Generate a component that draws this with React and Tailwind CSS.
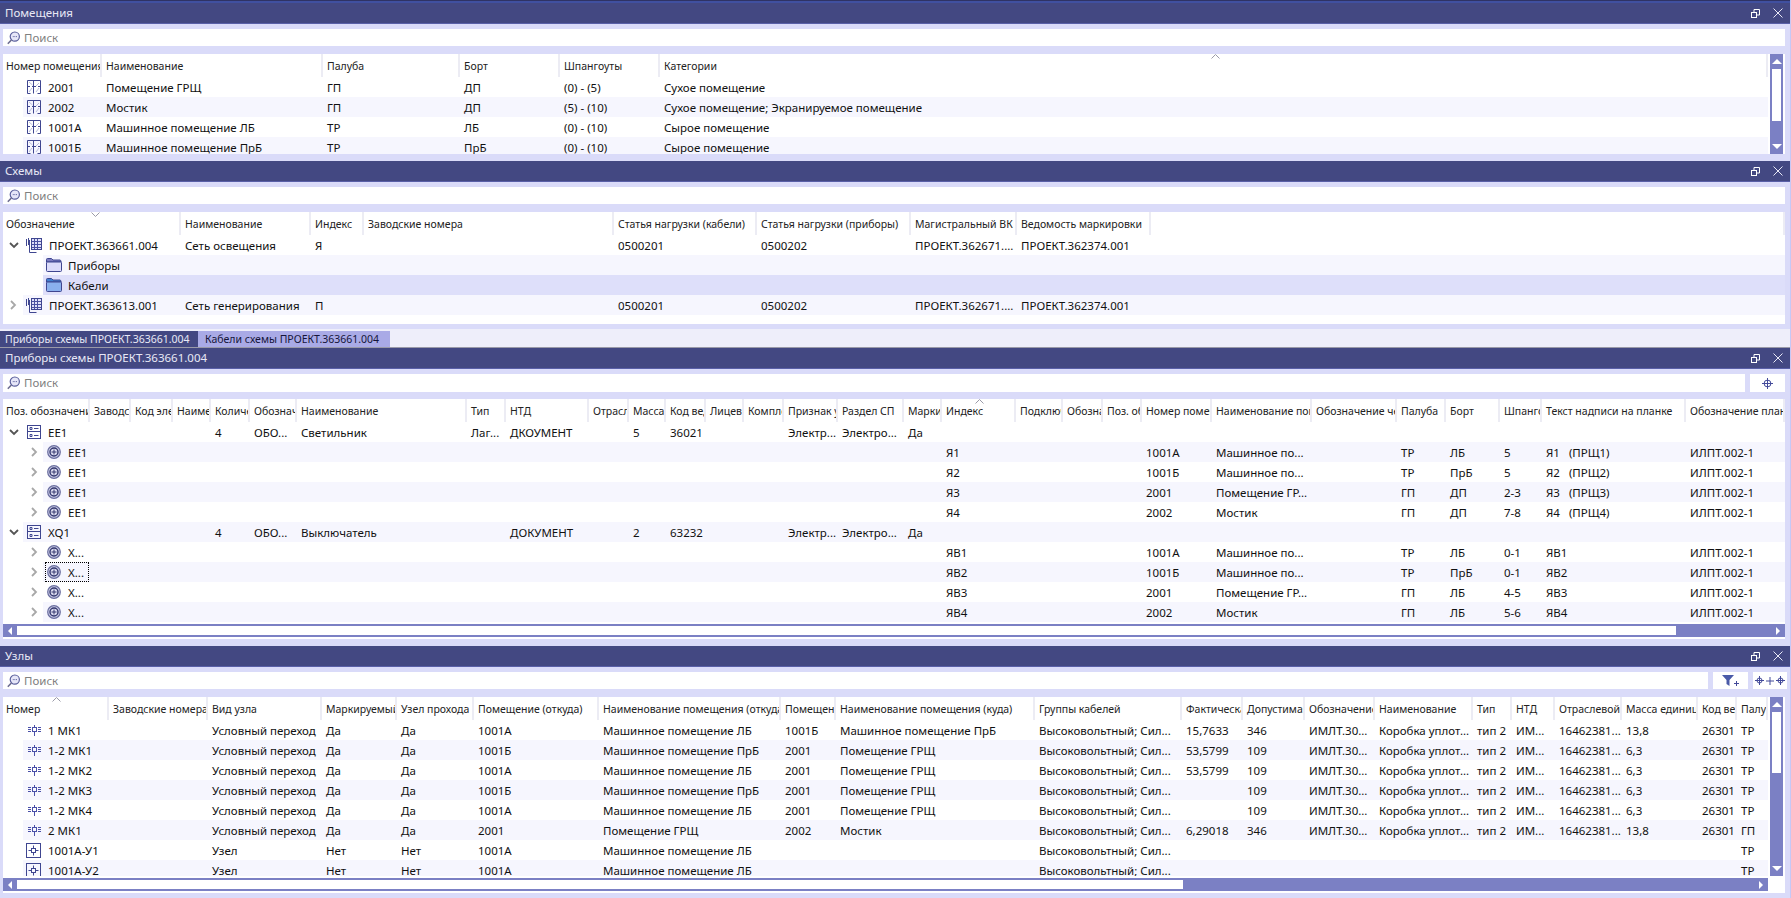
const P1_COLS = "grid-cols-[99px_221px_137px_100px_100px_1fr]"
const P2_COLS = "grid-cols-[178px_130px_53px_250px_143px_154px_106px_134px_1fr]"
const P3_COLS = "grid-cols-[87px_41px_42px_38px_39px_47px_170px_39px_83px_40px_37px_40px_38px_40px_54px_66px_38px_74px_47px_40px_39px_70px_100px_85px_49px_54px_42px_144px_99px]"
const P4_COLS = "grid-cols-[106px_99px_114px_75px_77px_125px_182px_55px_199px_147px_61px_62px_70px_98px_39px_43px_67px_76px_39px_31px]"

const SHADE_1 = "bg-[linear-gradient(to_right,transparent_20px,#f6f6fe_20px)]"
const SHADE_2 = "bg-[linear-gradient(to_right,transparent_40px,#f6f6fe_40px)]"
const SELECTED = "bg-[linear-gradient(to_right,transparent_40px,#dedffa_40px)]"

const SearchIcon = () => (
  <svg width="14" height="14" viewBox="0 0 14 14" className="shrink-0">
    <circle cx="7.8" cy="5.6" r="4.6" fill="#e6e6f8" stroke="#5a5f9c" strokeWidth="1.2" />
    <path d="M4.4 9L.8 12.8" stroke="#6c6c90" strokeWidth="1.6" />
    <path d="M5.8 5.6h.9M7.4 5.6h.9M9 5.6h.9" stroke="#5a5f9c" strokeWidth="1" />
  </svg>
)

const RestoreIcon = () => (
  <svg width="9" height="9" viewBox="0 0 9 9" fill="none" stroke="#fff" strokeWidth="1">
    <rect x="0.5" y="3.5" width="5" height="5" />
    <path d="M3 3.5V.5h5.5V6H5.5" />
  </svg>
)

const CloseIcon = () => (
  <svg width="10" height="10" viewBox="0 0 10 10" fill="none" stroke="#e8e8f6" strokeWidth="1">
    <path d="M.5.5l9 9M9.5.5l-9 9" />
  </svg>
)

const RoomIcon = () => (
  <svg width="14" height="14" viewBox="0 0 14 14" fill="none" className="shrink-0">
    <path d="M2 2l3.5 3M9 6l3 -3M2 12l3 -4M9 12l3 -4" stroke="#b9bcdf" />
    <path d="M.5 13.5V.5h13v13M.5 13.5h3M10.5 13.5h3" stroke="#3f4690" />
    <path d="M6.5 .5V13.5M.5 6.5H3M5 6.5h4M11 6.5h2.5" stroke="#3f4690" />
  </svg>
)

const SchemaIcon = () => (
  <svg width="16" height="15" viewBox="0 0 16 15" fill="none" className="-ml-[1px] shrink-0">
    <path d="M.5 1v7M2.5 0v7" stroke="#3f4690" strokeWidth="1" />
    <rect x="5.5" y="0.5" width="10" height="11" fill="#dfe0f8" stroke="#3f4690" />
    <path d="M6 3.5h9M6 6.5h9M6 9.5h9M8.5 1v10M11.5 1v10" stroke="#4a50a0" />
    <path d="M3.5 2v12.5h7" stroke="#3f4690" />
  </svg>
)

const FolderIcon = ({ body, top }) => (
  <svg width="16" height="14" viewBox="0 0 16 14" className="-mx-[1px] shrink-0">
    <path d="M.5 3V1.5a1 1 0 0 1 1-1h4l1.5 1.5h7a1.5 1.5 0 0 1 1 1V4H.5z" fill={top} stroke="#3f4690" />
    <rect x="0.5" y="4" width="15" height="9.5" rx="1" fill={body} stroke="#3f4690" />
  </svg>
)

const RackIcon = () => (
  <svg width="14" height="14" viewBox="0 0 14 14" fill="none" stroke="#3f4690" className="shrink-0">
    <rect x="0.5" y="0.5" width="13" height="13" />
    <path d="M.5 6.5h13" />
    <path d="M3 2.5h2v2H3zM3 9.5h2v2H3z" />
    <path d="M7 3.5h4.5M7 10.5h4.5" />
  </svg>
)

const DeviceIcon = () => (
  <svg width="14" height="14" viewBox="0 0 14 14" fill="none" className="shrink-0">
    <circle cx="7" cy="7" r="6.3" fill="#c9cbe6" stroke="#6a6e9f" strokeWidth="1.2" />
    <circle cx="7" cy="7" r="4" fill="#dcdcf0" stroke="#34386f" strokeWidth="1.4" />
    <path d="M7 4.5v5M4.5 7h5" stroke="#34386f" strokeWidth="1" />
  </svg>
)

const PassIcon = () => (
  <svg width="13" height="11" viewBox="0 0 13 11" fill="none" stroke="#4a50a8" className="mx-[0.5px] shrink-0">
    <path d="M0 2.5h3M0 4.5h3M0 6.5h3M10 2.5h3M10 4.5h3M10 6.5h3" />
    <rect x="4.5" y="2.5" width="4" height="4" />
    <path d="M6.5 0v2.5M6.5 6.5V11" />
  </svg>
)

const NodeIcon = () => (
  <svg width="15" height="15" viewBox="0 0 15 15" fill="none" stroke="#3f4690" className="-ml-[1px] shrink-0">
    <rect x="0.5" y="0.5" width="14" height="14" />
    <rect x="5.5" y="5.5" width="4" height="4" />
    <path d="M7.5 2.5v3M7.5 9.5v3M2.5 7.5h3M9.5 7.5h3" />
  </svg>
)

const Crosshair = () => (
  <svg width="11" height="11" viewBox="0 0 11 11" fill="none" stroke="#434a9a">
    <circle cx="5.5" cy="5.5" r="3.4" />
    <path d="M5.5 0v11M0 5.5h11" />
  </svg>
)

const SmallCross = () => (
  <svg width="9" height="9" viewBox="0 0 9 9" fill="none" stroke="#434a9a">
    <circle cx="4.5" cy="4.5" r="2.5" />
    <path d="M4.5 0v9M0 4.5h9" />
  </svg>
)

const FilterIcon = () => (
  <svg width="17" height="11" viewBox="0 0 17 11">
    <path d="M0 0h12L7.5 5v6L4.5 9V5z" fill="#4a5aa8" />
    <path d="M12 8.5h5M14.5 6v5" stroke="#434a9a" fill="none" />
  </svg>
)

const ChevronDown = ({ className }) => (
  <svg width="10" height="7" viewBox="0 0 10 7" fill="none" stroke="#555" strokeWidth="1.8" className={className}>
    <path d="M1 1l4 4 4-4" />
  </svg>
)

const ChevronRight = ({ className }) => (
  <svg width="7" height="10" viewBox="0 0 7 10" fill="none" stroke="#a8a8a8" strokeWidth="1.8" className={className}>
    <path d="M1 1l4 4-4 4" />
  </svg>
)

const TriUp = () => <div className="h-0 w-0 border-x-[5px] border-b-[5px] border-x-transparent border-b-white" />
const TriDown = () => <div className="h-0 w-0 border-x-[5px] border-t-[5px] border-x-transparent border-t-white" />
const TriLeft = () => <div className="h-0 w-0 border-y-[4px] border-r-[4px] border-y-transparent border-r-white" />
const TriRight = () => <div className="h-0 w-0 border-y-[4px] border-l-[4px] border-y-transparent border-l-white" />

const SortMark = ({ className, down }) => (
  <svg width="9" height="5" viewBox="0 0 9 5" fill="none" stroke="#9a9aa8" className={"absolute " + className}>
    <path d={down ? "M.5.5l4 4 4-4" : "M.5 4.5l4-4 4 4"} />
  </svg>
)

function TitleBar({ title }) {
  return (
    <div className="flex h-[21px] shrink-0 items-center justify-between border-b border-[#5a60a8] bg-[#434882] pl-[5px] pr-[7px] leading-5 text-[#e8e8f6]">
      <span>{title}</span>
      <div className="flex items-center gap-[13px]">
        <RestoreIcon />
        <CloseIcon />
      </div>
    </div>
  )
}

function SearchBox({ className }) {
  return (
    <div className={"flex items-center gap-[3px] bg-white pl-[4px] leading-4 text-[#808080] " + className}>
      <SearchIcon />
      <span>Поиск</span>
    </div>
  )
}

function HeaderRow({ cols, names, mark }) {
  return (
    <div className={"relative grid h-[23px] shrink-0 items-stretch text-[10.5px] " + cols}>
      {names.map((n, i) => (
        <div
          key={i}
          className={
            "overflow-hidden whitespace-nowrap border-r-2 border-[#ececf4] pt-px leading-[23px] text-[#222] " +
            (i === 0 ? "pl-[3px]" : "pl-1")
          }
        >
          {n}
        </div>
      ))}
      {mark}
    </div>
  )
}

function Row({ cols, cells, first, bg }) {
  return (
    <div className={"grid h-5 shrink-0 items-center " + cols + " " + (bg || "")}>
      <div className="flex h-5 items-center overflow-hidden">{first}</div>
      {cells.map((c, i) => (
        <div key={i} className="h-5 overflow-hidden whitespace-pre pl-1 pt-px leading-5 text-[#111]">
          {c}
        </div>
      ))}
    </div>
  )
}

// first column of a tree row
function TopItem({ open, icon, label }) {
  return (
    <div className="flex items-center">
      <div className="flex w-[24px] justify-center pr-[4px] pl-[1px]">
        {open === undefined ? null : open ? <ChevronDown /> : <ChevronRight />}
      </div>
      {icon}
      <span className="ml-[7px] h-5 pt-px leading-5 text-[#111]">{label}</span>
    </div>
  )
}

function ChildItem({ icon, label, focused, arrow }) {
  return (
    <div className="flex items-center">
      <div className="flex w-[42px] justify-end pr-[7px]">{arrow ? <ChevronRight /> : null}</div>
      <div className={"flex h-5 items-center gap-[7px] pl-[2px] " + (focused ? "w-[44px] outline-1 -outline-offset-1 outline-dotted outline-black" : "")}>
        {icon}
        <span className="h-5 pt-px leading-5 text-[#111]">{label}</span>
      </div>
    </div>
  )
}

function VScroll({ thumb }) {
  return (
    <div className={"ml-[2px] mr-[2px] flex w-[13px] shrink-0 flex-col items-center bg-[#7b80c4]"}>
      <div className="flex h-[15px] shrink-0 items-center justify-center">
        <TriUp />
      </div>
      <div className={"w-[9px] shrink-0 bg-white " + thumb} />
      <div className="flex-1" />
      <div className="flex h-[15px] shrink-0 items-center justify-center">
        <TriDown />
      </div>
    </div>
  )
}

function HScroll({ thumb, className }) {
  return (
    <div className={"flex h-[13px] shrink-0 items-center bg-[#7b80c4] " + className}>
      <div className="flex w-[14px] shrink-0 justify-center">
        <TriLeft />
      </div>
      <div className={"h-[9px] shrink-0 bg-white " + thumb} />
      <div className="flex-1" />
      <div className="flex w-[14px] shrink-0 justify-center">
        <TriRight />
      </div>
    </div>
  )
}

const rooms = [
  ["2001", "Помещение ГРЩ", "ГП", "ДП", "(0) - (5)", "Сухое помещение"],
  ["2002", "Мостик", "ГП", "ДП", "(5) - (10)", "Сухое помещение; Экранируемое помещение"],
  ["1001А", "Машинное помещение ЛБ", "ТР", "ЛБ", "(0) - (10)", "Сырое помещение"],
  ["1001Б", "Машинное помещение ПрБ", "ТР", "ПрБ", "(0) - (10)", "Сырое помещение"],
]

const p3Head = ["Поз. обозначение", "Заводские", "Код элемента", "Наименование", "Количество", "Обозначение", "Наименование", "Тип", "НТД", "Отраслевой", "Масса", "Код ведомости", "Лицевой", "Комплект", "Признак установки", "Раздел СП", "Маркировка", "Индекс", "Подключение", "Обозначение", "Поз. обозначение", "Номер помещения", "Наименование помещения", "Обозначение чертежа", "Палуба", "Борт", "Шпангоуты", "Текст надписи на планке", "Обозначение планки"]

const groupCells = (name, type, doc, mass, code) => ["", "", "", "4", "ОБО...", name, type, doc, "", mass, code, "", "", "Электр...", "Электро...", "Да", "", "", "", "", "", "", "", "", "", "", "", ""]
const deviceCells = (idx, num, room, deck, side, frame, text) => ["", "", "", "", "", "", "", "", "", "", "", "", "", "", "", "", idx, "", "", "", num, room, "", deck, side, frame, text, "ИЛПТ.002-1"]

const p4Head = ["Номер", "Заводские номера", "Вид узла", "Маркируемый", "Узел прохода", "Помещение (откуда)", "Наименование помещения (откуда)", "Помещение (куда)", "Наименование помещения (куда)", "Группы кабелей", "Фактическая", "Допустимая", "Обозначение", "Наименование", "Тип", "НТД", "Отраслевой", "Масса единицы", "Код ведомости", "Палуба"]

const passCells = (from, fromName, to, toName, fact, allow, mass, deck) => ["", "Условный переход", "Да", "Да", from, fromName, to, toName, "Высоковольтный; Сил...", fact, allow, "ИМЛТ.30...", "Коробка уплот...", "тип 2", "ИМ...", "16462381...", mass, "26301", deck]
const nodeCells = ["", "Узел", "Нет", "Нет", "1001А", "Машинное помещение ЛБ", "", "", "Высоковольтный; Сил...", "", "", "", "", "", "", "", "", "", "ТР"]

const LB = "Машинное помещение ЛБ"
const PRB = "Машинное помещение ПрБ"
const GRSH = "Помещение ГРЩ"

const nodes = [
  ["1 МК1", passCells("1001А", LB, "1001Б", PRB, "15,7633", "346", "13,8", "ТР")],
  ["1-2 МК1", passCells("1001Б", PRB, "2001", GRSH, "53,5799", "109", "6,3", "ТР")],
  ["1-2 МК2", passCells("1001А", LB, "2001", GRSH, "53,5799", "109", "6,3", "ТР")],
  ["1-2 МК3", passCells("1001Б", PRB, "2001", GRSH, "", "109", "6,3", "ТР")],
  ["1-2 МК4", passCells("1001А", LB, "2001", GRSH, "", "109", "6,3", "ТР")],
  ["2 МК1", passCells("2001", GRSH, "2002", "Мостик", "6,29018", "346", "13,8", "ГП")],
]

export default function App() {
  return (
    <div className="flex h-[898px] w-full flex-col overflow-hidden border-r border-[#c6c8f6] bg-[#dadbf9] font-['Noto_Sans',sans-serif] text-[11.5px] leading-none">
      <div className="h-[1px] shrink-0 bg-[#2f3364]" />
      <div className="h-[2px] shrink-0 bg-[#4050a0]" />

      {/* Помещения */}
      <TitleBar title="Помещения" />
      <div className="shrink-0 pb-[7px] pl-[3px] pr-[5px] pt-[5px]">
        <SearchBox className="h-[17px]" />
        <div className="mt-[8px] flex h-[100px] bg-white">
          <div className="min-w-0 flex-1 overflow-hidden">
            <HeaderRow
              cols={P1_COLS}
              names={["Номер помещения", "Наименование", "Палуба", "Борт", "Шпангоуты", "Категории"]}
              mark={<SortMark className="left-[1208px] top-0" />}
            />
            {rooms.map((r, i) => (
              <Row
                key={r[0]}
                cols={P1_COLS}
                bg={i % 2 ? SHADE_1 : ""}
                first={<TopItem icon={<RoomIcon />} label={r[0]} open={undefined} />}
                cells={r.slice(1)}
              />
            ))}
          </div>
          <VScroll thumb="h-[52px]" />
        </div>
      </div>

      {/* Схемы */}
      <TitleBar title="Схемы" />
      <div className="shrink-0 pb-[5px] pl-[3px] pr-[5px] pt-[5px]">
        <SearchBox className="h-[17px]" />
        <div className="mt-[8px] h-[112px] bg-white">
          <HeaderRow
            cols={P2_COLS}
            names={["Обозначение", "Наименование", "Индекс", "Заводские номера", "Статья нагрузки (кабели)", "Статья нагрузки (приборы)", "Магистральный ВК", "Ведомость маркировки", ""]}
            mark={<SortMark down className="left-[88px] top-0" />}
          />
          <Row
            cols={P2_COLS}
            first={<TopItem open={true} icon={<SchemaIcon />} label="ПРОЕКТ.363661.004" />}
            cells={["Сеть освещения", "Я", "", "0500201", "0500202", "ПРОЕКТ.362671....", "ПРОЕКТ.362374.001", ""]}
          />
          <Row
            cols={P2_COLS}
            bg={SHADE_2}
            first={<ChildItem icon={<FolderIcon body="#dcdcfa" top="#7c7cc0" />} label="Приборы" />}
            cells={["", "", "", "", "", "", "", ""]}
          />
          <Row
            cols={P2_COLS}
            bg={SELECTED}
            first={<ChildItem icon={<FolderIcon body="#8ab0ee" top="#3f7fcf" />} label="Кабели" />}
            cells={["", "", "", "", "", "", "", ""]}
          />
          <Row
            cols={P2_COLS}
            bg={SHADE_1}
            first={<TopItem open={false} icon={<SchemaIcon />} label="ПРОЕКТ.363613.001" />}
            cells={["Сеть генерирования", "П", "", "0500201", "0500202", "ПРОЕКТ.362671....", "ПРОЕКТ.362374.001", ""]}
          />
        </div>
      </div>

      {/* вкладки */}
      <div className="flex h-[19px] shrink-0 items-stretch whitespace-nowrap border-b border-[#9a9aa8] bg-[#eeeefa] pt-[2px] text-[10.5px] leading-4">
        <div className="w-[198px] bg-[#434882] pl-[5px] text-[#e8e8f6]">Приборы схемы ПРОЕКТ.363661.004</div>
        <div className="w-[192px] bg-[#a9aae6] pl-[7px] text-[#15153a]">Кабели схемы ПРОЕКТ.363661.004</div>
      </div>

      {/* Приборы схемы */}
      <TitleBar title="Приборы схемы ПРОЕКТ.363661.004" />
      <div className="shrink-0 pb-[7px] pl-[3px] pr-[5px] pt-[5px]">
        <div className="flex h-[18px] gap-[5px]">
          <SearchBox className="flex-1" />
          <div className="flex w-[35px] items-center justify-center bg-white">
            <Crosshair />
          </div>
        </div>
        <div className="mt-[7px] h-[240px] overflow-hidden bg-white">
          <HeaderRow cols={P3_COLS} names={p3Head} mark={<SortMark className="left-[972px] top-0" />} />
          <Row cols={P3_COLS} first={<TopItem open={true} icon={<RackIcon />} label="ЕЕ1" />} cells={groupCells("Светильник", "Лаг...", "ДКОУМЕНТ", "5", "36021")} />
          <Row cols={P3_COLS} bg={SHADE_2} first={<ChildItem arrow icon={<DeviceIcon />} label="ЕЕ1" />} cells={deviceCells("Я1", "1001А", "Машинное по...", "ТР", "ЛБ", "5", "Я1   (ПРЩ1)")} />
          <Row cols={P3_COLS} first={<ChildItem arrow icon={<DeviceIcon />} label="ЕЕ1" />} cells={deviceCells("Я2", "1001Б", "Машинное по...", "ТР", "ПрБ", "5", "Я2   (ПРЩ2)")} />
          <Row cols={P3_COLS} bg={SHADE_2} first={<ChildItem arrow icon={<DeviceIcon />} label="ЕЕ1" />} cells={deviceCells("Я3", "2001", "Помещение ГР...", "ГП", "ДП", "2-3", "Я3   (ПРЩ3)")} />
          <Row cols={P3_COLS} first={<ChildItem arrow icon={<DeviceIcon />} label="ЕЕ1" />} cells={deviceCells("Я4", "2002", "Мостик", "ГП", "ДП", "7-8", "Я4   (ПРЩ4)")} />
          <Row cols={P3_COLS} bg={SHADE_1} first={<TopItem open={true} icon={<RackIcon />} label="XQ1" />} cells={groupCells("Выключатель", "", "ДОКУМЕНТ", "2", "63232")} />
          <Row cols={P3_COLS} first={<ChildItem arrow icon={<DeviceIcon />} label="X..." />} cells={deviceCells("ЯВ1", "1001А", "Машинное по...", "ТР", "ЛБ", "0-1", "ЯВ1")} />
          <Row cols={P3_COLS} bg={SHADE_2} first={<ChildItem arrow focused icon={<DeviceIcon />} label="X..." />} cells={deviceCells("ЯВ2", "1001Б", "Машинное по...", "ТР", "ПрБ", "0-1", "ЯВ2")} />
          <Row cols={P3_COLS} first={<ChildItem arrow icon={<DeviceIcon />} label="X..." />} cells={deviceCells("ЯВ3", "2001", "Помещение ГР...", "ГП", "ЛБ", "4-5", "ЯВ3")} />
          <Row cols={P3_COLS} bg={SHADE_2} first={<ChildItem arrow icon={<DeviceIcon />} label="X..." />} cells={deviceCells("ЯВ4", "2002", "Мостик", "ГП", "ЛБ", "5-6", "ЯВ4")} />
          <HScroll className="mt-[2px]" thumb="w-[1659px]" />
        </div>
      </div>

      {/* Узлы */}
      <TitleBar title="Узлы" />
      <div className="shrink-0 pl-[3px] pr-[5px] pt-[5px]">
        <div className="flex h-[17px]">
          <SearchBox className="flex-1" />
          <div className="ml-[5px] flex w-[35px] items-center justify-center bg-white">
            <FilterIcon />
          </div>
          <div className="-mr-[2px] ml-[5px] flex w-[34px] items-center justify-center gap-[2px] bg-white text-[#434a9a]">
            <SmallCross />
            <svg width="8" height="8" viewBox="0 0 8 8" fill="none" stroke="#434a9a">
              <path d="M4 0v8M0 4h8" />
            </svg>
            <SmallCross />
          </div>
        </div>
        <div className="mt-[8px] h-[196px] bg-white">
          <div className="flex h-[179px]">
            <div className="min-w-0 flex-1 overflow-hidden">
              <HeaderRow cols={P4_COLS} names={p4Head} mark={<SortMark className="left-[49px] top-0" />} />
              {nodes.map((n, i) => (
                <Row
                  key={n[0]}
                  cols={P4_COLS}
                  bg={i % 2 ? SHADE_1 : ""}
                  first={<TopItem icon={<PassIcon />} label={n[0]} open={undefined} />}
                  cells={n[1]}
                />
              ))}
              <Row cols={P4_COLS} first={<TopItem icon={<NodeIcon />} label="1001А-У1" open={undefined} />} cells={nodeCells} />
              <Row cols={P4_COLS} bg={SHADE_1} first={<TopItem icon={<NodeIcon />} label="1001А-У2" open={undefined} />} cells={nodeCells} />
            </div>
            <VScroll thumb="h-[61px]" />
          </div>
          <HScroll className="mr-[17px] mt-[2px]" thumb="w-[1166px]" />
        </div>
      </div>
    </div>
  )
}
